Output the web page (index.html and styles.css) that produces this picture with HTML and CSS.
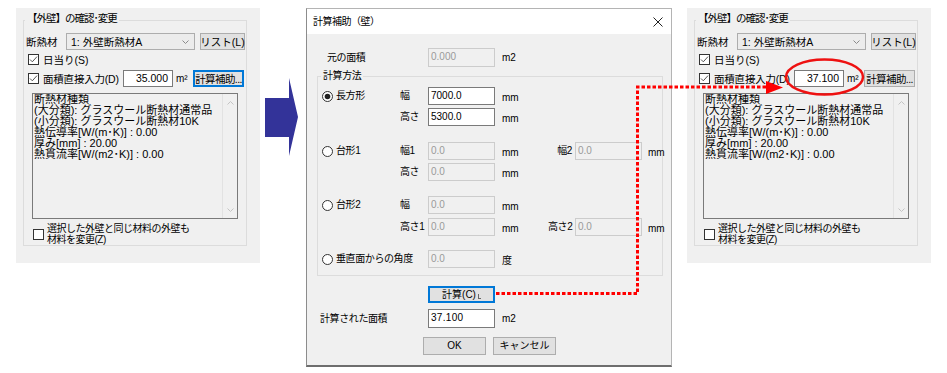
FILE: index.html
```html
<!DOCTYPE html>
<html lang="ja">
<head>
<meta charset="utf-8">
<title>計算補助（壁）</title>
<link rel="stylesheet" href="styles.css">
</head>
<body>
<div class="page">

  <section class="panel panel-left">
    <fieldset class="grp">
      <legend class="grp-title">【外壁】の確認･変更</legend>
      <div class="row row-mat">
        <span class="lbl-mat">断熱材</span>
        <div class="combo"><span>1: 外壁断熱材A</span><svg class="chev" width="7" height="4" viewBox="0 0 7 4"><path d="M0.5 0.5 L3.5 3.5 L6.5 0.5" fill="none" stroke="#8a8a8a"/></svg></div>
        <button class="btn btn-list">リスト(L)</button>
      </div>
      <div class="row row-sun">
        <svg class="chk" width="11" height="11" viewBox="0 0 11 11"><rect x="0.5" y="0.5" width="10" height="10" fill="#fff" stroke="#333"/><path d="M2 5.5 L4.3 7.8 L9 2.6" fill="none" stroke="#555"/></svg>
        <span>日当り(S)</span>
      </div>
      <div class="row row-area">
        <svg class="chk" width="11" height="11" viewBox="0 0 11 11"><rect x="0.5" y="0.5" width="10" height="10" fill="#fff" stroke="#333"/><path d="M2 5.5 L4.3 7.8 L9 2.6" fill="none" stroke="#555"/></svg>
        <span class="lbl-area">面積直接入力(D)</span>
        <div class="field">35.000</div>
        <span class="unit">m²</span>
        <button class="btn btn-calc btn-focus">計算補助...</button>
      </div>
      <div class="memo">
        <div class="memo-text">
          <div>断熱材種類</div>
          <div>(大分類): グラスウール断熱材通常品</div>
          <div>(小分類): グラスウール断熱材10K</div>
          <div>熱伝導率[W/(m･K)] : 0.00</div>
          <div>厚み[mm] : 20.00</div>
          <div>熱貫流率[W/(m2･K)] : 0.00</div>
        </div>
        <div class="memo-scroll">
          <svg width="7" height="4" viewBox="0 0 7 4"><path d="M0.5 3.5 L3.5 0.5 L6.5 3.5" fill="none" stroke="#c4c4c4"/></svg>
          <svg width="7" height="4" viewBox="0 0 7 4"><path d="M0.5 0.5 L3.5 3.5 L6.5 0.5" fill="none" stroke="#c4c4c4"/></svg>
        </div>
      </div>
      <div class="row row-same">
        <svg class="chk" width="11" height="11" viewBox="0 0 11 11"><rect x="0.5" y="0.5" width="10" height="10" fill="#fff" stroke="#333"/></svg>
        <span class="same-text">選択した外壁と同じ材料の外壁も<br>材料を変更(Z)</span>
      </div>
    </fieldset>
  </section>

  <svg class="big-arrow" width="33" height="78" viewBox="0 0 33 78"><polygon points="0,20 24,20 24,0 33,39 24,78 24,59 0,59" fill="#333399"/></svg>

  <section class="dialog">
    <header class="dlg-title">
      <span>計算補助（壁）</span>
      <svg class="close" width="10" height="10" viewBox="0 0 10 10"><path d="M0.5 0.5 L9.5 9.5 M9.5 0.5 L0.5 9.5" stroke="#222" stroke-width="1"/></svg>
    </header>
    <div class="dlg-body">
      <div class="line orig-row">
        <span class="line-lbl lbl-orig">元の面積</span>
        <div class="tb tb-dis">0.000</div>
        <span class="u">m2</span>
      </div>

      <fieldset class="method">
        <legend class="method-title">計算方法</legend>
        <div class="mrow r1">
          <span class="opt"><svg width="11" height="11" viewBox="0 0 11 11"><circle cx="5.5" cy="5.5" r="5" fill="#fff" stroke="#333"/><circle cx="5.5" cy="5.5" r="2.8" fill="#222"/></svg>長方形</span>
          <span class="fl">幅</span>
          <div class="tb">7000.0</div>
          <span class="mu">mm</span>
        </div>
        <div class="mrow r2">
          <span class="opt"></span>
          <span class="fl">高さ</span>
          <div class="tb">5300.0</div>
          <span class="mu">mm</span>
        </div>
        <div class="mrow r3">
          <span class="opt"><svg width="11" height="11" viewBox="0 0 11 11"><circle cx="5.5" cy="5.5" r="5" fill="#fff" stroke="#333"/></svg>台形1</span>
          <span class="fl">幅1</span>
          <div class="tb tb-dis">0.0</div>
          <span class="mu">mm</span>
          <span class="fl2">幅2</span>
          <div class="tb tb-dis">0.0</div>
          <span class="mu2">mm</span>
        </div>
        <div class="mrow r4">
          <span class="opt"></span>
          <span class="fl">高さ</span>
          <div class="tb tb-dis">0.0</div>
          <span class="mu">mm</span>
        </div>
        <div class="mrow r5">
          <span class="opt"><svg width="11" height="11" viewBox="0 0 11 11"><circle cx="5.5" cy="5.5" r="5" fill="#fff" stroke="#333"/></svg>台形2</span>
          <span class="fl">幅</span>
          <div class="tb tb-dis">0.0</div>
          <span class="mu">mm</span>
        </div>
        <div class="mrow r6">
          <span class="opt"></span>
          <span class="fl">高さ1</span>
          <div class="tb tb-dis">0.0</div>
          <span class="mu">mm</span>
          <span class="fl2">高さ2</span>
          <div class="tb tb-dis">0.0</div>
          <span class="mu2">mm</span>
        </div>
        <div class="mrow r7">
          <span class="opt opt-wide"><svg width="11" height="11" viewBox="0 0 11 11"><circle cx="5.5" cy="5.5" r="5" fill="#fff" stroke="#333"/></svg>垂直面からの角度</span>
          <div class="tb tb-dis">0.0</div>
          <span class="mu">度</span>
        </div>
      </fieldset>

      <div class="calc-row">
        <button class="btn btn-do">計算(C)<span class="cursor-mark"></span></button>
      </div>
      <div class="line result-row">
        <span class="line-lbl lbl-res">計算された面積</span>
        <div class="tb tb-res">37.100</div>
        <span class="u">m2</span>
      </div>
      <div class="ok-row">
        <button class="btn btn-dlg">OK</button>
        <button class="btn btn-dlg">キャンセル</button>
      </div>
    </div>
  </section>

  <section class="panel panel-right">
    <fieldset class="grp">
      <legend class="grp-title">【外壁】の確認･変更</legend>
      <div class="row row-mat">
        <span class="lbl-mat">断熱材</span>
        <div class="combo"><span>1: 外壁断熱材A</span><svg class="chev" width="7" height="4" viewBox="0 0 7 4"><path d="M0.5 0.5 L3.5 3.5 L6.5 0.5" fill="none" stroke="#8a8a8a"/></svg></div>
        <button class="btn btn-list">リスト(L)</button>
      </div>
      <div class="row row-sun">
        <svg class="chk" width="11" height="11" viewBox="0 0 11 11"><rect x="0.5" y="0.5" width="10" height="10" fill="#fff" stroke="#333"/><path d="M2 5.5 L4.3 7.8 L9 2.6" fill="none" stroke="#555"/></svg>
        <span>日当り(S)</span>
      </div>
      <div class="row row-area">
        <svg class="chk" width="11" height="11" viewBox="0 0 11 11"><rect x="0.5" y="0.5" width="10" height="10" fill="#fff" stroke="#333"/><path d="M2 5.5 L4.3 7.8 L9 2.6" fill="none" stroke="#555"/></svg>
        <span class="lbl-area">面積直接入力(D)</span>
        <div class="field">37.100</div>
        <span class="unit">m²</span>
        <button class="btn btn-calc">計算補助...</button>
      </div>
      <div class="memo">
        <div class="memo-text">
          <div>断熱材種類</div>
          <div>(大分類): グラスウール断熱材通常品</div>
          <div>(小分類): グラスウール断熱材10K</div>
          <div>熱伝導率[W/(m･K)] : 0.00</div>
          <div>厚み[mm] : 20.00</div>
          <div>熱貫流率[W/(m2･K)] : 0.00</div>
        </div>
        <div class="memo-scroll">
          <svg width="7" height="4" viewBox="0 0 7 4"><path d="M0.5 3.5 L3.5 0.5 L6.5 3.5" fill="none" stroke="#c4c4c4"/></svg>
          <svg width="7" height="4" viewBox="0 0 7 4"><path d="M0.5 0.5 L3.5 3.5 L6.5 0.5" fill="none" stroke="#c4c4c4"/></svg>
        </div>
      </div>
      <div class="row row-same">
        <svg class="chk" width="11" height="11" viewBox="0 0 11 11"><rect x="0.5" y="0.5" width="10" height="10" fill="#fff" stroke="#333"/></svg>
        <span class="same-text">選択した外壁と同じ材料の外壁も<br>材料を変更(Z)</span>
      </div>
    </fieldset>
  </section>

  <svg class="annot" width="947" height="373" viewBox="0 0 947 373">
    <path d="M496 293.5 H637.5 V87 H768" fill="none" stroke="#ff0000" stroke-width="3" stroke-dasharray="3.5 2"/>
    <polygon points="766,81 783,87.5 766,94" fill="#ff0000"/>
    <ellipse cx="824.5" cy="77" rx="38.5" ry="17.5" fill="none" stroke="#ee1111" stroke-width="2.5"/>
  </svg>
</div>
</body>
</html>
```

FILE: styles.css
```css
* { box-sizing: border-box; }

html, body {
  margin: 0;
  padding: 0;
  background: #ffffff;
}

body {
  font-family: "Liberation Sans", "Noto Sans CJK JP", sans-serif;
  color: #000;
}

.page {
  position: relative;
  width: 947px;
  height: 373px;
  display: flex;
  align-items: flex-start;
  padding: 8px 0 0 16px;
  overflow: hidden;
}

/* ---------- side panels ---------- */
.panel {
  flex: none;
  width: 244px;
  height: 255px;
  background: #f0f0f0;
  padding: 4px 0 0 7px;
  font-size: 10.5px;
  line-height: 12px;
}

.panel-left { margin-right: 5px; }

.grp {
  width: 224px;
  height: 234px;
  margin: 0;
  padding: 2px 0 0 0;
  border: 1px solid #dcdcdc;
  min-width: 0;
}

.grp-title {
  margin-left: 1px;
  padding: 0 2px 5px;
  line-height: 12px;
  letter-spacing: -1px;
  white-space: nowrap;
}

.row {
  display: flex;
  align-items: center;
}

.row-mat {
  margin-top: 2px;
  height: 17px;
  padding-left: 2px;
}

.lbl-mat { width: 40px; flex: none; }

.combo {
  flex: none;
  width: 129px;
  height: 17px;
  border: 1px solid #adadad;
  background: #ececec;
  display: flex;
  align-items: center;
  justify-content: space-between;
  padding: 0 5px 0 4px;
  white-space: nowrap;
}

.chev { display: block; }

.btn {
  font: inherit;
  margin: 0;
  padding: 0;
  color: #000;
  background: #e1e1e1;
  border: 1px solid #adadad;
  display: flex;
  align-items: center;
  justify-content: center;
  white-space: nowrap;
}

.btn-list {
  flex: none;
  width: 45px;
  height: 17px;
  margin-left: 5px;
}

.row-sun {
  margin-top: 3px;
  height: 13px;
  padding-left: 4px;
  gap: 4px;
}

.chk { display: block; flex: none; }

.row-area {
  margin-top: 4px;
  height: 17px;
  padding-left: 4px;
}

.lbl-area {
  flex: none;
  width: 80px;
  margin-left: 4px;
  white-space: nowrap;
  letter-spacing: -0.2px;
}

.field {
  flex: none;
  width: 50px;
  height: 17px;
  border: 1px solid #7a7a7a;
  background: #fff;
  text-align: right;
  padding-right: 4px;
  line-height: 15px;
}

.unit {
  flex: none;
  width: 14px;
  margin-left: 3px;
  font-size: 10px;
}

.btn-calc {
  flex: none;
  width: 51px;
  height: 17px;
  margin-left: 3px;
  letter-spacing: -0.6px;
}

.btn-focus { border: 2px solid #0078d7; }

.memo {
  display: flex;
  width: 206px;
  height: 126px;
  margin: 6px 0 0 8px;
  border: 1px solid #7a7a7a;
  background: #f0f0f0;
}

.memo-text {
  flex: 1;
  padding: 0 0 0 1px;
  font-size: 11px;
  line-height: 11px;
  white-space: nowrap;
  overflow: hidden;
}

.memo-scroll {
  flex: none;
  width: 15px;
  border-left: 1px solid #e2e2e2;
  display: flex;
  flex-direction: column;
  justify-content: space-between;
  align-items: center;
  padding: 7px 0 6px;
}

.memo-scroll svg { display: block; }

.row-same {
  margin-top: 4px;
  height: 22px;
  padding-left: 9px;
}

.same-text {
  margin-left: 3px;
  font-size: 10px;
  line-height: 11px;
  letter-spacing: -0.5px;
  white-space: nowrap;
}

/* ---------- arrow ---------- */
.big-arrow {
  flex: none;
  display: block;
  margin-top: 70px;
  margin-right: 8px;
}

/* ---------- dialog ---------- */
.dialog {
  flex: none;
  width: 366px;
  height: 359px;
  margin-right: 15px;
  border: 1px solid #b4b4b4;
  border-left-color: #8c8c8c;
  border-bottom: 2px solid #6e6e6e;
  display: flex;
  flex-direction: column;
  font-size: 10px;
  line-height: 12px;
  letter-spacing: -0.4px;
}

.dlg-title {
  flex: none;
  height: 25px;
  background: #ffffff;
  display: flex;
  align-items: center;
  justify-content: space-between;
  padding: 0 8px 0 6px;
  font-size: 10px;
  letter-spacing: -0.5px;
}

.close { display: block; }

.dlg-body {
  flex: 1;
  background: #f0f0f0;
  padding-top: 14px;
}

.line {
  display: flex;
  align-items: center;
  height: 19px;
}

.line-lbl {
  flex: none;
  width: 121px;
  white-space: nowrap;
}

.lbl-orig { padding-left: 20px; }
.lbl-res { padding-left: 13px; }

.tb {
  flex: none;
  width: 67px;
  height: 19px;
  border: 1px solid #7a7a7a;
  background: #ffffff;
  padding-left: 2px;
  line-height: 16px;
  letter-spacing: 0;
}

.tb-dis {
  background: #f0f0f0;
  border-color: #cccccc;
  color: #9a9a9a;
}

.u {
  margin-left: 7px;
  letter-spacing: 0;
}

.method {
  width: 346px;
  margin: 3px 0 0 10px;
  padding: 0 0 7px 0;
  border: 1px solid #dcdcdc;
  min-width: 0;
}

.method-title {
  margin-left: 3px;
  padding: 0 2px;
  line-height: 12px;
}

.mrow {
  display: grid;
  grid-template-columns: 82px 28px 67px 53px 27px 68px auto;
  align-items: center;
  height: 18px;
}

.mrow .tb { height: 18px; line-height: 15px; }

.r1 { margin-top: 5px; }
.r2 { margin-top: 3px; }
.r3 { margin-top: 16px; }
.r4 { margin-top: 3px; }
.r5 { margin-top: 15px; }
.r6 { margin-top: 4px; }
.r7 { margin-top: 14px; }

.opt {
  display: flex;
  align-items: center;
  gap: 3px;
  padding-left: 4px;
  white-space: nowrap;
}

.opt svg { display: block; flex: none; }

.opt-wide { grid-column: 1 / 3; }

.fl { white-space: nowrap; }

.mu {
  padding-left: 7px;
  padding-top: 3px;
  letter-spacing: 0;
}

.fl2 {
  text-align: right;
  padding-right: 3px;
  white-space: nowrap;
}

.mu2 {
  padding-left: 5px;
  padding-top: 3px;
  letter-spacing: 0;
}

.calc-row {
  margin-top: 10px;
  padding-left: 121px;
}

.btn-do {
  width: 67px;
  height: 17px;
  border: 2px solid #0078d7;
  letter-spacing: 0;
  gap: 2px;
}

.cursor-mark {
  display: block;
  width: 3px;
  height: 5px;
  margin-top: 3px;
  border-left: 1px solid #666;
  border-bottom: 1px solid #666;
}

.result-row { margin-top: 6px; }

.tb-res { letter-spacing: 0.3px; }

.ok-row {
  display: flex;
  gap: 7px;
  margin-top: 9px;
  padding-left: 116px;
}

.btn-dlg {
  width: 63px;
  height: 18px;
}

/* ---------- annotations ---------- */
.annot {
  position: absolute;
  left: 0;
  top: 0;
  pointer-events: none;
}
```
